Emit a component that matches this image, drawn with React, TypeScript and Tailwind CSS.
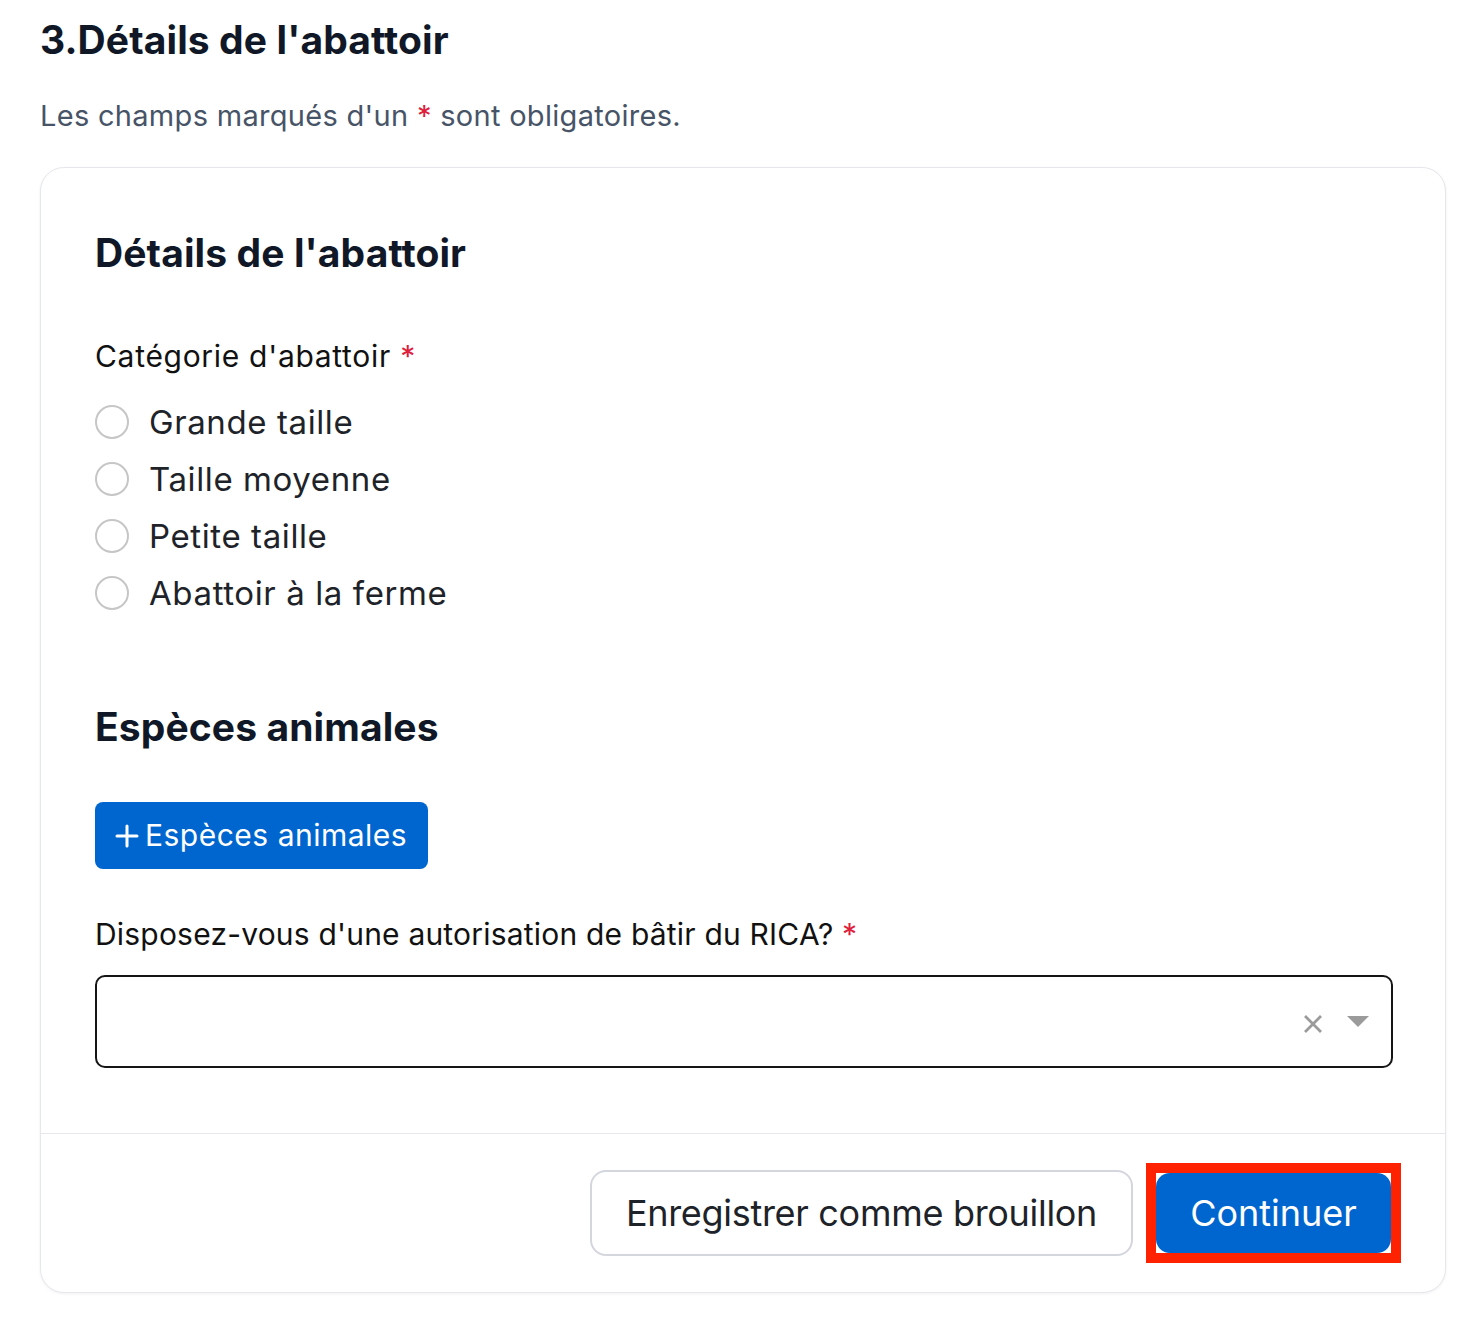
import React from "react";

const radios = ["Grande taille", "Taille moyenne", "Petite taille", "Abattoir à la ferme"];

export default function App() {
  return (
    <div className="min-h-[1322px] bg-white pl-[40px] pt-[14px] font-['Inter',sans-serif]">
      <h1 className="text-[39px] font-bold leading-[52px] tracking-[0.1px] text-[#101828]">
        3.Détails de l'abattoir
      </h1>
      <p className="mt-[30px] text-[29px] leading-[40px] tracking-[0.3px] text-[#475467]">
        Les champs marqués d'un <span className="text-[#e0203a]">*</span> sont obligatoires.
      </p>
      <div className="mt-[31px] w-[1406px] rounded-[24px] border border-[#e6e7ec] bg-white shadow-[0_1px_3px_rgba(16,24,40,0.06)]">
        <div className="px-[54px] pt-[59px] pb-[65px]">
          <h2 className="text-[39px] font-bold leading-[52px] tracking-[0.1px] text-[#101828]">
            Détails de l'abattoir
          </h2>
          <div className="mt-[57px] text-[30px] leading-[40px] tracking-[0.7px] text-[#111111]">
            Catégorie d'abattoir <span className="text-[#e0203a]">*</span>
          </div>
          <div className="mt-[17px] flex flex-col">
            {radios.map((r) => (
              <label key={r} className="flex h-[57px] items-center gap-[20px]">
                <span className="h-[34px] w-[34px] shrink-0 rounded-full border-2 border-[#c6c6c6] bg-white" />
                <span className="text-[33px] leading-[40px] tracking-[0.6px] text-[#1e2329]">{r}</span>
              </label>
            ))}
          </div>
          <h2 className="mt-[80px] text-[39px] font-bold leading-[52px] tracking-[0.1px] text-[#101828]">
            Espèces animales
          </h2>
          <button className="mt-[49px] flex h-[67px] w-[333px] items-center gap-[6px] rounded-[8px] bg-[#0066cf] pl-[20px] text-[30px] tracking-[0.5px] text-white">
            <svg width="24" height="24" viewBox="0 0 24 24" fill="none" stroke="white" strokeWidth="3" strokeLinecap="round">
              <path d="M12 2v20M2 12h20" />
            </svg>
            <span>Espèces animales</span>
          </button>
          <div className="mt-[45px] text-[30px] leading-[40px] tracking-[0.2px] text-[#111111]">
            Disposez-vous d'une autorisation de bâtir du RICA? <span className="text-[#e0203a]">*</span>
          </div>
          <div className="mt-[21px] flex h-[93px] w-[1298px] items-center justify-end gap-[24px] rounded-[10px] border-2 border-[#151515] pr-[22px]">
            <svg width="20" height="20" viewBox="0 0 20 20" className="mt-[4px]" stroke="#9b9b9b" strokeWidth="2.8" strokeLinecap="square">
              <path d="M3 3l14 14M17 3L3 17" />
            </svg>
            <svg width="22" height="12" viewBox="0 0 22 12" fill="#9b9b9b">
              <path d="M0 0h22L11 11z" />
            </svg>
          </div>
        </div>
        <div className="flex items-center justify-end gap-[13px] border-t border-[#e6e7ec] pt-[29px] pb-[29px] pr-[44px]">
          <button className="flex h-[86px] w-[543px] items-center justify-center rounded-[16px] border-2 border-[#d4d6dd] bg-white text-[36px] tracking-[-0.3px] text-[#1e2329]">
            Enregistrer comme brouillon
          </button>
          <div className="border-[10px] border-[#ff2200] bg-white">
            <button className="flex h-[80px] w-[235px] items-center justify-center rounded-[14px] bg-[#0066cf] text-[36px] tracking-[0px] text-white">
              Continuer
            </button>
          </div>
        </div>
      </div>
    </div>
  );
}
